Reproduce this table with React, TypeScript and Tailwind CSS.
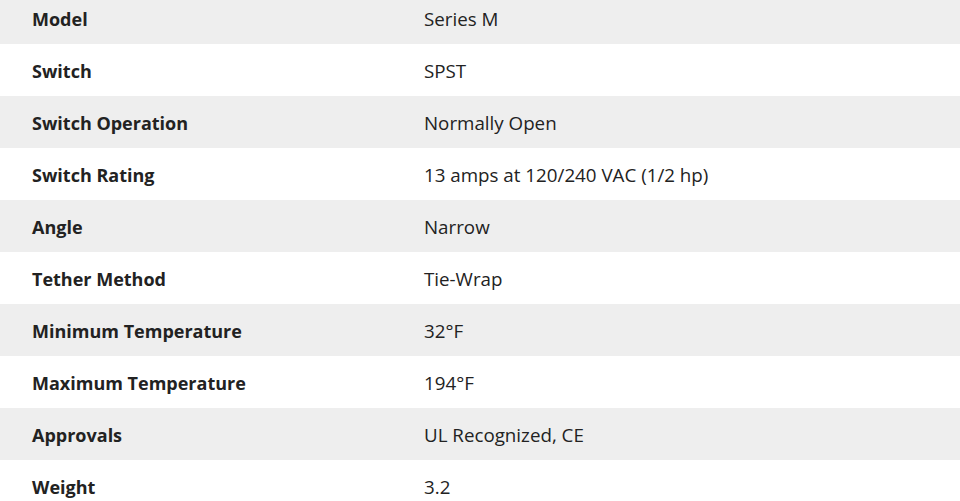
const specs: [string, string][] = [
  ["Model", "Series M"],
  ["Switch", "SPST"],
  ["Switch Operation", "Normally Open"],
  ["Switch Rating", "13 amps at 120/240 VAC (1/2 hp)"],
  ["Angle", "Narrow"],
  ["Tether Method", "Tie-Wrap"],
  ["Minimum Temperature", "32°F"],
  ["Maximum Temperature", "194°F"],
  ["Approvals", "UL Recognized, CE"],
  ["Weight", "3.2"],
];

export default function App() {
  return (
    <div className="w-[960px] h-[501px] overflow-hidden bg-white font-['Open_Sans',sans-serif] text-[#222]">
      <div className="-mt-2">
        {specs.map(([label, value], i) => (
          <div
            key={label}
            className={`grid grid-cols-[392px_1fr] h-[52px] items-center pt-[2px] ${i % 2 === 0 ? "bg-[#eeeeee]" : "bg-white"}`}
          >
            <div className="pl-8 font-bold text-[18px]">{label}</div>
            <div className="pl-8 text-[18.75px]">{value}</div>
          </div>
        ))}
      </div>
    </div>
  );
}
